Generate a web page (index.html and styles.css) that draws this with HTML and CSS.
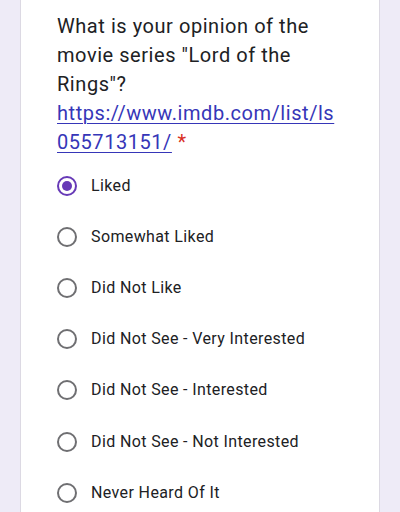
FILE: index.html
```html
<!DOCTYPE html>
<html lang="en">
<head>
<meta charset="utf-8">
<title>Form question</title>
<link rel="stylesheet" href="styles.css">
</head>
<body>
<div class="card">
  <div class="question">What is your opinion of the movie series "Lord of the Rings"? <a class="link" href="#">https://www.imdb.com/list/ls055713151/</a> <span class="req">*</span></div>
  <div class="options">
    <div class="option"><span class="radio checked"></span><span class="label">Liked</span></div>
    <div class="option"><span class="radio"></span><span class="label">Somewhat Liked</span></div>
    <div class="option"><span class="radio"></span><span class="label">Did Not Like</span></div>
    <div class="option"><span class="radio"></span><span class="label">Did Not See - Very Interested</span></div>
    <div class="option"><span class="radio"></span><span class="label">Did Not See - Interested</span></div>
    <div class="option"><span class="radio"></span><span class="label">Did Not See - Not Interested</span></div>
    <div class="option"><span class="radio"></span><span class="label">Never Heard Of It</span></div>
  </div>
</div>
</body>
</html>
```
FILE: styles.css
```css
html, body {
  margin: 0;
  padding: 0;
}
body {
  background: #eeebf7;
  font-family: Roboto, "Noto Sans", Arial, sans-serif;
  color: #202124;
  height: 512px;
  overflow: hidden;
}
.card {
  margin: 0 20px;
  background: #ffffff;
  border-left: 1px solid #dcd9e3;
  border-right: 1px solid #dcd9e3;
  padding: 12px 37px 0 36px;
  height: 512px;
  box-sizing: border-box;
  overflow: hidden;
}
.question {
  font-size: 20px;
  line-height: 29px;
  letter-spacing: 0.55px;
  color: #202124;
}
.link {
  color: #3636b8;
  text-decoration: underline;
  text-decoration-thickness: 1px;
  text-underline-offset: 3px;
  overflow-wrap: break-word;
}
.req {
  color: #d93025;
}
.options {
  margin-top: 3px;
  display: flex;
  flex-direction: column;
}
.option {
  height: 51.2px;
  flex: none;
  display: flex;
  align-items: center;
  gap: 14px;
}
.radio {
  box-sizing: border-box;
  width: 20px;
  height: 20px;
  border: 2px solid #6f6f72;
  border-radius: 50%;
  flex: none;
  display: flex;
  align-items: center;
  justify-content: center;
}
.radio.checked {
  border-color: #673ab7;
}
.radio.checked::after {
  content: "";
  width: 10px;
  height: 10px;
  border-radius: 50%;
  background: #673ab7;
}
.label {
  font-size: 16px;
  line-height: 20px;
  letter-spacing: 0.38px;
  color: #202124;
}
```
